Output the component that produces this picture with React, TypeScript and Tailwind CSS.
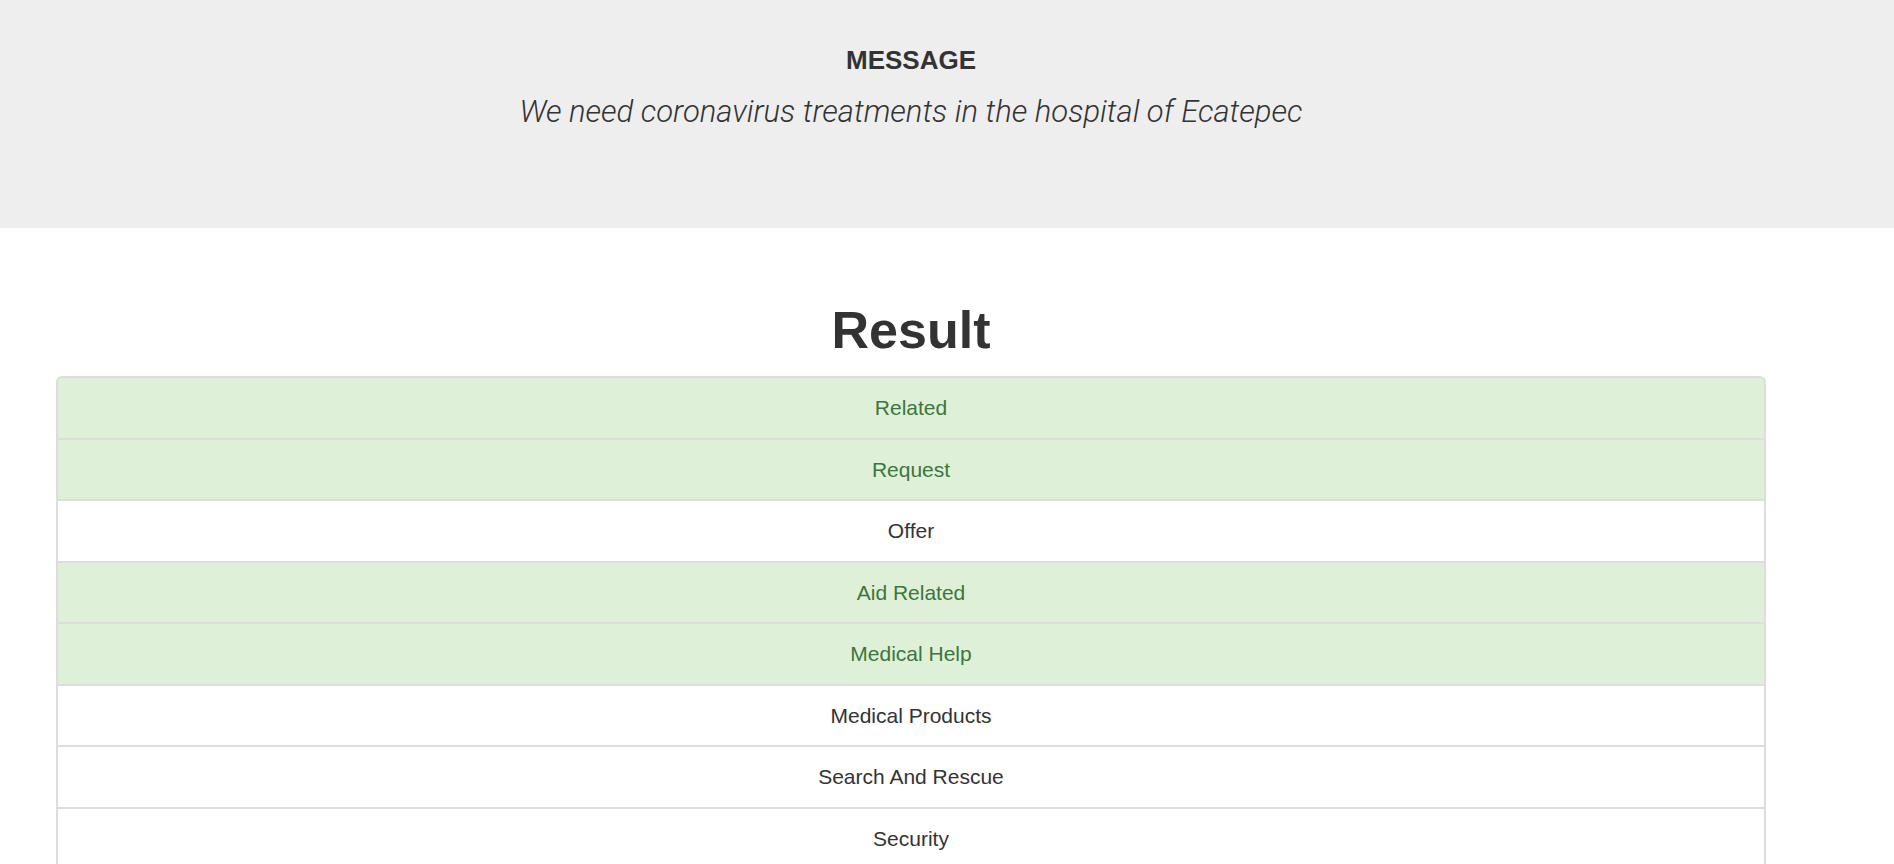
import React from "react";

const results: { label: string; hit: boolean }[] = [
  { label: "Related", hit: true },
  { label: "Request", hit: true },
  { label: "Offer", hit: false },
  { label: "Aid Related", hit: true },
  { label: "Medical Help", hit: true },
  { label: "Medical Products", hit: false },
  { label: "Search And Rescue", hit: false },
  { label: "Security", hit: false },
];

const App: React.FC = () => {
  return (
    <div className="min-h-screen bg-white text-[#333] font-['Liberation_Sans',Arial,sans-serif]">
      <div className="h-[228px] bg-[#eeeeee]">
        <div className="mr-[72px] flex flex-col items-center pt-[46px]">
          <h4 className="text-[26px] leading-[29px] font-bold">MESSAGE</h4>
          <p className="mt-[20px] text-[31px] leading-[34px] italic font-light text-[#333] font-['Roboto',sans-serif]">
            We need coronavirus treatments in the hospital of Ecatepec
          </p>
        </div>
      </div>
      <div className="mr-[72px] px-[56px]">
        <h1 className="mt-[74px] mb-[17px] text-center text-[52px] leading-[57px] font-bold">
          Result
        </h1>
        <ul className="flex flex-col">
          {results.map((r, i) => (
            <li
              key={r.label}
              className={
                "-mb-[2px] flex h-[63.5px] items-center justify-center border-2 border-[#dddddd] text-[21px] " +
                (i === 0 ? "rounded-t-[6px] " : "") +
                (r.hit ? "bg-[#dff0d8] text-[#3c763d]" : "bg-white text-[#333]")
              }
            >
              {r.label}
            </li>
          ))}
        </ul>
      </div>
    </div>
  );
};

export default App;
